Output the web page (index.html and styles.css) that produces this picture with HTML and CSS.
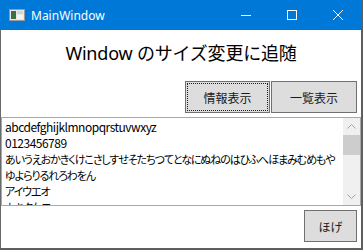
FILE: index.html
```html
<!DOCTYPE html>
<html>
<head>
    <title>MainWindow</title>
    <meta charset="utf-8">
    <link rel="stylesheet" href="styles.css">
</head>
<body>

<div class="window">
    <div class="titlebar">
        <svg class="app-icon" width="16" height="12" viewBox="0 0 16 12">
            <rect x="0.5" y="0.5" width="15" height="11" fill="#e8e8e8" stroke="#9a9a9a"/>
            <rect x="2" y="2" width="5" height="8" fill="#3c6e4a"/>
            <rect x="8" y="2" width="6" height="3" fill="#cfd8d0"/>
            <rect x="8" y="6" width="6" height="4" fill="#f4f4f4"/>
        </svg>
        <span class="title">MainWindow</span>
        <div class="caption-buttons">
            <div class="caption-btn">
                <svg width="10" height="10" viewBox="0 0 10 10"><path d="M0 5.5H10" stroke="#fff" stroke-width="1"/></svg>
            </div>
            <div class="caption-btn">
                <svg width="10" height="10" viewBox="0 0 10 10"><rect x="0.5" y="0.5" width="9" height="9" fill="none" stroke="#fff"/></svg>
            </div>
            <div class="caption-btn">
                <svg width="10" height="10" viewBox="0 0 10 10"><path d="M0 0L10 10M10 0L0 10" stroke="#fff" stroke-width="1"/></svg>
            </div>
        </div>
    </div>

    <div class="client">
        <div class="heading">Window のサイズ変更に追随</div>

        <div class="button-row">
            <button class="btn btn-focus" type="button"><span>情報表示</span></button>
            <button class="btn btn-list" type="button">一覧表示</button>
        </div>

        <div class="textbox">
            <div class="text-lines">
                <div>abcdefghijklmnopqrstuvwxyz</div>
                <div>0123456789</div>
                <div class="kana">あいうえおかきくけこさしすせそたちつてとなにぬねのはひふへほまみむめもや</div>
                <div class="kana">ゆよらりるれろわをん</div>
                <div class="kana">アイウエオ</div>
                <div class="kana">カキクケコ</div>
            </div>
            <div class="scrollbar">
                <div class="arrow">
                    <svg width="9" height="5" viewBox="0 0 9 5"><path d="M0.5 4.5L4.5 0.5L8.5 4.5" fill="none" stroke="#a3a3a3"/></svg>
                </div>
                <div class="track"><div class="thumb"></div></div>
                <div class="arrow">
                    <svg width="9" height="5" viewBox="0 0 9 5"><path d="M0.5 0.5L4.5 4.5L8.5 0.5" fill="none" stroke="#a3a3a3"/></svg>
                </div>
            </div>
        </div>

        <div class="bottom-row">
            <button class="btn btn-hoge" type="button">ほげ</button>
        </div>
    </div>
</div>

</body>
</html>
```

FILE: styles.css
```css
body, html {
    margin: 0; padding: 0;
}
body {
    background: #5f5f5f;
    font-family: 'Noto Sans', 'Noto Sans CJK JP', sans-serif;
}
.window {
    width: 360px;
    height: 248px;
    border-left: 1px solid #6a6a6a;
    border-right: 2px solid #5f5f5f;
    border-bottom: 2px solid #5f5f5f;
    display: flex;
    flex-direction: column;
    background: #fff;
}
.titlebar {
    height: 30px;
    background: #0078d7;
    display: flex;
    align-items: center;
    color: #fff;
    margin-left: -1px;
}
.app-icon {
    margin-left: 9px;
    margin-right: 6px;
}
.title {
    font-size: 12px;
    flex: 1;
}
.caption-buttons {
    display: flex;
    height: 30px;
}
.caption-btn {
    width: 46px;
    height: 30px;
    display: flex;
    align-items: center;
    justify-content: center;
}
.client {
    flex: 1;
    display: flex;
    flex-direction: column;
}
.heading {
    text-align: center;
    font-size: 18px;
    line-height: 24px;
    margin-top: 11px;
    color: #000;
    letter-spacing: -0.2px;
}
.button-row {
    display: flex;
    justify-content: flex-end;
    gap: 1px;
    margin-top: 16px;
    padding-right: 4px;
}
.btn {
    height: 32px;
    border: 1px solid #707070;
    background: #dddddd;
    font-family: 'Noto Sans CJK JP', sans-serif;
    font-size: 12px;
    color: #1a1a1a;
    padding: 0;
    margin: 0;
}
.btn-focus {
    width: 85px;
    position: relative;
}
.btn-focus::after {
    content: '';
    position: absolute;
    left: 1px; top: 1px; right: 1px; bottom: 1px;
    border: 1px dotted #202020;
}
.btn-list {
    width: 86px;
}
.textbox {
    margin-top: 4px;
    height: 87px;
    border: 1px solid #a8a8a8;
    display: flex;
    overflow: hidden;
}
.text-lines {
    flex: 1;
    padding: 1px 0 0 3px;
    font-family: 'Noto Sans CJK JP', sans-serif;
    font-size: 12px;
    line-height: 16px;
    letter-spacing: -0.5px;
    white-space: nowrap;
    overflow: hidden;
    color: #000;
}
.text-lines .kana {
    font-size: 11px;
    font-feature-settings: "palt";
    letter-spacing: -1.1px;
}
.scrollbar {
    width: 17px;
    background: #f0f0f0;
    display: flex;
    flex-direction: column;
}
.arrow {
    height: 17px;
    display: flex;
    align-items: center;
    justify-content: center;
}
.track {
    flex: 1;
}
.thumb {
    height: 20px;
    background: #cdcdcd;
}
.bottom-row {
    display: flex;
    justify-content: flex-end;
    padding-right: 4px;
    margin-top: 4px;
}
.btn-hoge {
    width: 53px;
}
```
